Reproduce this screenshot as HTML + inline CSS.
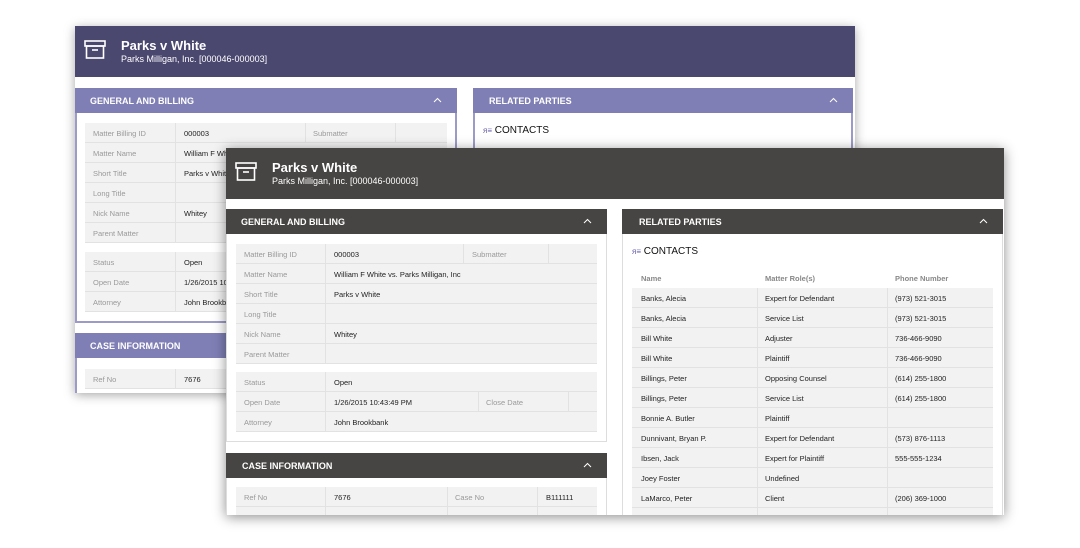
<!DOCTYPE html>
<html><head><meta charset="utf-8"><style>
*{box-sizing:border-box;margin:0;padding:0}
body{width:1080px;height:548px;background:#fff;position:relative;overflow:hidden;font-family:"Liberation Sans",sans-serif}
.win{position:absolute;background:#fff;overflow:hidden}
.hdr{position:absolute;left:0;top:0;right:0;height:51px;color:#fff}
.hdr .t{position:absolute;left:46px;top:12px;font-size:13px;font-weight:bold}
.hdr .s{position:absolute;left:46px;top:28px;font-size:9px}
.hdr svg{position:absolute;left:9px;top:14px}
.sec{position:absolute;height:25px;color:#fff;font-size:9px;font-weight:bold;padding:8px 0 0 15px}
.sec svg{position:absolute;right:15px;top:9px}
.box{position:absolute;border:1px solid #ddd;border-top:none;background:#fff}
.row{position:absolute;height:20px;background:#f2f2f2;border-bottom:1px solid #e2e2e2;font-size:7.5px;color:#222}
.row span{position:absolute;top:6px}
.row i{position:absolute;top:0;bottom:0;width:1px;background:#e2e2e2}
.l{color:#999}
</style></head><body>

<div class="win" style="left:75px;top:26px;width:780px;height:367px;box-shadow:0 2px 10px rgba(0,0,0,.35)">
 <div class="hdr" style="background:#4b4870">
  <svg width="22" height="20" viewBox="0 0 22 20" fill="none" stroke="#fff" stroke-width="1.6"><rect x="1" y="1" width="20" height="5"/><rect x="2.5" y="6" width="17" height="12"/><line x1="8" y1="10" x2="14" y2="10"/></svg>
  <div class="t">Parks v White</div><div class="s">Parks Milligan, Inc. [000046-000003]</div>
 </div>
 <div class="sec" style="left:0;top:62px;width:382px;background:#7f7fb5">GENERAL AND BILLING<svg width="9" height="6" viewBox="0 0 9 6"><polyline points="1,5 4.5,1.5 8,5" fill="none" stroke="#fff" stroke-width="1"/></svg></div>
 <div class="box" style="left:0;top:87px;width:382px;height:210px;border:2px solid #9c9ac8;border-top:none"></div>
 <div class="sec" style="left:398px;top:62px;width:380px;background:#7f7fb5;padding-left:16px">RELATED PARTIES<svg width="9" height="6" viewBox="0 0 9 6"><polyline points="1,5 4.5,1.5 8,5" fill="none" stroke="#fff" stroke-width="1"/></svg></div>
 <div class="box" style="left:398px;top:87px;width:380px;height:40px;border:2px solid #9c9ac8;border-top:none"></div>
 <div style="position:absolute;left:408px;top:99px;font-size:10px;color:#111"><span style="color:#6a62a8;font-size:8px">ᴙ≡</span> CONTACTS</div>
 <div class="sec" style="left:0;top:307px;width:382px;background:#7f7fb5">CASE INFORMATION</div>
 <div class="box" style="left:0;top:332px;width:382px;height:40px;border-left:2px solid #9c9ac8"></div>
 <div id="bk"></div>
</div>

<div class="win" style="left:226px;top:148px;width:778px;height:367px;box-shadow:0 2px 12px rgba(0,0,0,.45)">
 <div class="hdr" style="background:#474543">
  <svg width="22" height="20" viewBox="0 0 22 20" fill="none" stroke="#fff" stroke-width="1.6"><rect x="1" y="1" width="20" height="5"/><rect x="2.5" y="6" width="17" height="12"/><line x1="8" y1="10" x2="14" y2="10"/></svg>
  <div class="t">Parks v White</div><div class="s">Parks Milligan, Inc. [000046-000003]</div>
 </div>
 <div class="sec" style="left:0;top:61px;width:381px;background:#474543">GENERAL AND BILLING<svg width="9" height="6" viewBox="0 0 9 6"><polyline points="1,5 4.5,1.5 8,5" fill="none" stroke="#fff" stroke-width="1"/></svg></div>
 <div class="box" style="left:0;top:86px;width:381px;height:208px"></div>
 <div class="sec" style="left:396px;top:61px;width:381px;background:#474543;padding-left:17px">RELATED PARTIES<svg width="9" height="6" viewBox="0 0 9 6"><polyline points="1,5 4.5,1.5 8,5" fill="none" stroke="#fff" stroke-width="1"/></svg></div>
 <div class="box" style="left:396px;top:86px;width:381px;height:290px"></div>
 <div class="sec" style="left:0;top:305px;width:381px;background:#474543;padding-left:16px">CASE INFORMATION<svg width="9" height="6" viewBox="0 0 9 6"><polyline points="1,5 4.5,1.5 8,5" fill="none" stroke="#fff" stroke-width="1"/></svg></div>
 <div class="box" style="left:0;top:330px;width:381px;height:50px"></div>
 <div style="position:absolute;left:406px;top:98px;font-size:10px;color:#111"><span style="color:#6a62a8;font-size:8px">ᴙ≡</span> CONTACTS</div>
 <div style="position:absolute;top:126px;left:415px;font-size:7.5px;color:#888;font-weight:bold">Name</div>
 <div style="position:absolute;top:126px;left:539px;font-size:7.5px;color:#888;font-weight:bold">Matter Role(s)</div>
 <div style="position:absolute;top:126px;left:669px;font-size:7.5px;color:#888;font-weight:bold">Phone Number</div>
 <div id="fr"></div>
</div>

<script>
function rows(id,x0,w,data){var h='';data.forEach(function(r){var s='<div class="row" style="left:'+x0+'px;top:'+r[0]+'px;width:'+w+'px">';r[1].forEach(function(c){s+='<i style="left:'+c+'px"></i>'});r[2].forEach(function(t){s+='<span class="'+(t[2]?'l':'')+'" style="left:'+t[0]+'px">'+t[1]+'</span>'});h+=s+'</div>'});document.getElementById(id).innerHTML+=h}
var B=[[97,[90,220,310],[[8,'Matter Billing ID',1],[99,'000003'],[228,'Submatter',1]]],
[117,[90],[[8,'Matter Name',1],[99,'William F White']]],
[137,[90],[[8,'Short Title',1],[99,'Parks v White']]],
[157,[90],[[8,'Long Title',1]]],
[177,[90],[[8,'Nick Name',1],[99,'Whitey']]],
[197,[90],[[8,'Parent Matter',1]]],
[226,[90],[[8,'Status',1],[99,'Open']]],
[246,[90],[[8,'Open Date',1],[99,'1/26/2015 10:43:49 PM']]],
[266,[90],[[8,'Attorney',1],[99,'John Brookbank']]],
[343,[90],[[8,'Ref No',1],[99,'7676']]]];
rows('bk',10,362,B);
var F=[[96,[89,227,312],[[8,'Matter Billing ID',1],[98,'000003'],[236,'Submatter',1]]],
[116,[89],[[8,'Matter Name',1],[98,'William F White vs. Parks Milligan, Inc']]],
[136,[89],[[8,'Short Title',1],[98,'Parks v White']]],
[156,[89],[[8,'Long Title',1]]],
[176,[89],[[8,'Nick Name',1],[98,'Whitey']]],
[196,[89],[[8,'Parent Matter',1]]],
[224,[89],[[8,'Status',1],[98,'Open']]],
[244,[89,242,332],[[8,'Open Date',1],[98,'1/26/2015 10:43:49 PM'],[250,'Close Date',1]]],
[264,[89],[[8,'Attorney',1],[98,'John Brookbank']]],
[339,[89,211,301],[[8,'Ref No',1],[98,'7676'],[219,'Case No',1],[310,'B111111']]],
[359,[89,211,301],[]]];
rows('fr',10,361,F);
var C=[['Banks, Alecia','Expert for Defendant','(973) 521-3015'],['Banks, Alecia','Service List','(973) 521-3015'],['Bill White','Adjuster','736-466-9090'],['Bill White','Plaintiff','736-466-9090'],['Billings, Peter','Opposing Counsel','(614) 255-1800'],['Billings, Peter','Service List','(614) 255-1800'],['Bonnie A. Butler','Plaintiff',''],['Dunnivant, Bryan P.','Expert for Defendant','(573) 876-1113'],['Ibsen, Jack','Expert for Plaintiff','555-555-1234'],['Joey Foster','Undefined',''],['LaMarco, Peter','Client','(206) 369-1000'],['','','']];
var R=C.map(function(c,i){return [140+i*20,[125,255],[[9,c[0]],[133,c[1]],[263,c[2]]]]});
rows('fr',406,361,R);
</script>
</body></html>
